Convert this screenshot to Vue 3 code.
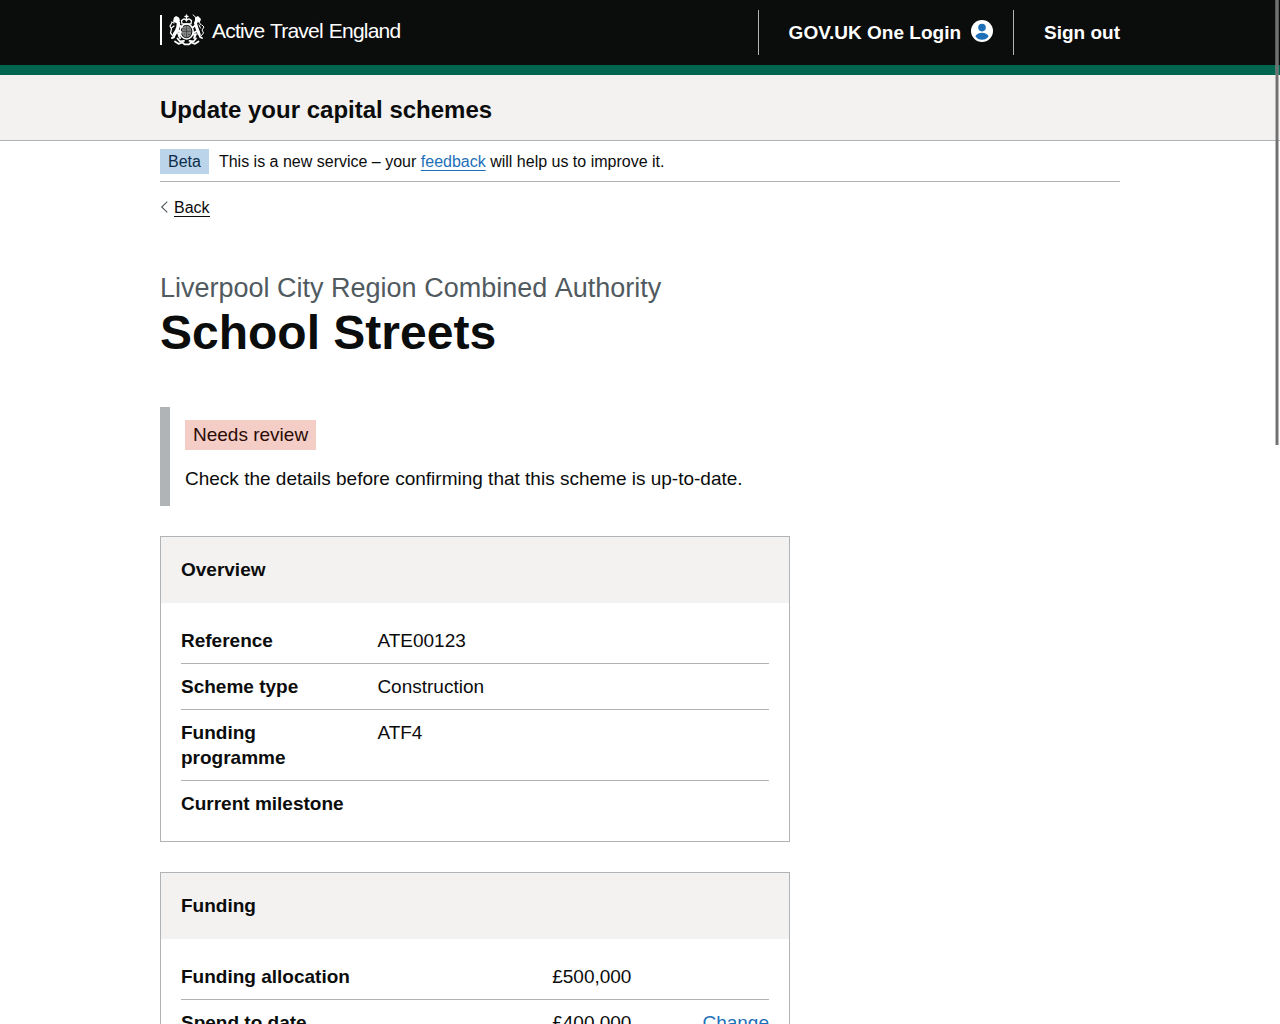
<script setup>
const overview = [
  { key: 'Reference', value: 'ATE00123' },
  { key: 'Scheme type', value: 'Construction' },
  { key: 'Funding programme', value: 'ATF4' },
  { key: 'Current milestone', value: '' },
]
const funding = [
  { key: 'Funding allocation', value: '£500,000' },
  { key: 'Spend to date', value: '£400,000', action: 'Change' },
]
</script>

<template>
  <div class="page">
    <header class="header">
      <div class="container header-row">
        <a class="brand">
          <svg class="crest" viewBox="0 0 36 32" width="36" height="32" aria-hidden="true">
            <g fill="none" stroke="#fff" stroke-linecap="round" stroke-linejoin="round">
              <path stroke-width="3.4" d="M7.500 5.500 9.500 9 9 13 7.500 17 5.500 20" />
              <path stroke-width="2" d="M9 11 13 13M8 16 12 18 10 22M6 19 5 23 3 24M9 19 11 24" />
              <path stroke-width="1.2" d="M4 22 1.500 19 2.500 15 1 12 2.500 9.500M5 9 2.500 8M5 12 3 13.500" />
              <path stroke-width="3" d="M28 5.500 26.500 9 27.500 13 29 17 30 20" />
              <path stroke-width="1.8" d="M27 11 23.500 13.500M28 17 24.500 19 26 23M30 18 31 23 33 24M27 20 25 24" />
              <path stroke-width="1" d="M28 4.500 24 .8M32 22 34.500 19 33 16 35 13 33 11M30 8 32 11M30 11 31.500 14" />
              <path stroke-width="1.3" d="M12.500 6.500 13 9.800h9l.5-3.300M13 6.500Q15 3.500 17.500 6.500 20 3.500 22 6.500M17.500 1v6M16 2.500h3" />
              <ellipse cx="17.6" cy="17.500" rx="6.6" ry="7.500" stroke-width="1.6" />
              <path stroke-width="1.8" d="M8.500 24.500 11 27.500 15 26.800M27 24.500 24.500 27.500 20.500 26.800" />
              <path stroke-width="1.8" d="M6 27.500 9.500 29.800 13.500 28.500 15.500 30.300h4.500l2-1.800 4 1.300 3.500-2.300" />
            </g>
            <ellipse cx="17.6" cy="17.500" rx="4.8" ry="5.900" fill="#858787" />
            <path fill="none" stroke="#303232" stroke-width=".7" d="M17.600 12v11M13 17.300h9.200M14.500 14.500l2 1M19 20l2 1M15 20h1M19.500 14.500h1" />
            <path fill="#fff" d="M5 3.500 7 2l3 1.500 1 3-3 3-4-2zM26 3.500 29 2l3 3-1 3-5 1z" />
          </svg>
          <span class="brand-name">Active Travel England</span>
        </a>
        <nav class="account">
          <a class="account-item login"><span>GOV.UK One Login</span>
            <svg class="user" viewBox="0 0 22 22" width="22" height="22" aria-hidden="true">
              <circle cx="11" cy="11" r="11" fill="#fff" />
              <circle cx="11" cy="7.600" r="3.800" fill="#1d70b8" />
              <path d="M4.400 16.200C5.400 14 8 12.800 11 12.800s5.600 1.200 6.600 3.400C16.200 18.500 13.800 19.800 11 19.800S5.800 18.500 4.400 16.200Z" fill="#1d70b8" />
            </svg>
          </a>
          <a class="account-item">Sign out</a>
        </nav>
      </div>
    </header>
    <div class="service">
      <div class="container service-name">Update your capital schemes</div>
    </div>
    <div class="container">
      <div class="phase">
        <strong class="phase-tag">Beta</strong>
        <span>This is a new service – your <a class="feedback">feedback</a> will help us to improve it.</span>
      </div>
      <a class="back">
        <svg viewBox="0 0 8 12" width="8" height="12" aria-hidden="true"><path d="M7.300 .7 1.700 6l5.600 5.300" fill="none" stroke="#505a5f" stroke-width="1.100" /></svg>
        <span>Back</span>
      </a>
      <main>
        <h1><span class="caption">Liverpool City Region Combined Authority</span>School Streets</h1>
        <div class="inset">
          <strong class="review-tag">Needs review</strong>
          <p>Check the details before confirming that this scheme is up-to-date.</p>
        </div>
        <section class="card">
          <h2>Overview</h2>
          <dl>
            <div v-for="row in overview" :key="row.key" class="row">
              <dt>{{ row.key }}</dt>
              <dd>{{ row.value }}</dd>
            </div>
          </dl>
        </section>
        <section class="card funding">
          <h2>Funding</h2>
          <dl>
            <div v-for="row in funding" :key="row.key" class="row">
              <dt>{{ row.key }}</dt>
              <dd>{{ row.value }}</dd>
              <dd v-if="row.action" class="action"><a>{{ row.action }}</a></dd>
            </div>
          </dl>
        </section>
      </main>
    </div>
    <div class="scroll-thumb"></div>
  </div>
</template>

<style>
html, body { overflow: hidden; }
</style>

<style scoped>
.page {
  position: relative;
  height: 1024px;
  overflow: hidden;
  background: #fff;
  color: #0b0c0c;
  font: 19px/25px "Liberation Sans", Arial, sans-serif;
}
.container { width: 960px; margin: 0 auto; }
.header { height: 65px; background: #0b0c0c; border-bottom: 10px solid #00664f; }
.header-row { display: flex; justify-content: space-between; }
.brand {
  display: flex;
  height: 30px;
  margin-top: 15px;
  padding-left: 7px;
  border-left: 2px solid #fff;
  color: #fff;
}
.crest { margin-top: -1px; }
.brand-name {
  margin-left: 7px;
  font-size: 21px;
  line-height: 32px;
  letter-spacing: -.8px;
  word-spacing: 1px;
  white-space: nowrap;
}
.account { display: flex; margin-top: 10px; color: #fff; font-weight: 700; }
.account-item { height: 45px; padding-left: 30px; border-left: 1px solid #b1b4b6; line-height: 45px; box-sizing: border-box; }
.login { display: flex; width: 255px; padding-left: 29.600px; }
.user { margin: 10px 0 0 10px; }
.service { padding: 20px 0 15px; height: 30px; background: #f3f2f1; border-bottom: 1px solid #b1b4b6; }
.service-name { font-size: 24px; line-height: 30px; font-weight: 700; }
.phase {
  display: flex;
  height: 25px;
  padding: 8px 0 7px;
  border-bottom: 1px solid #b1b4b6;
  font-size: 16px;
}
.phase-tag { margin-right: 10px; padding: 0 8px; background: #bbd4ea; color: #0c2d4a; font-weight: 400; }
.feedback { color: #1d70b8; text-decoration: underline; text-decoration-thickness: 1px; text-underline-offset: 3px; text-decoration-skip-ink: none; }
.back { display: flex; align-items: center; gap: 6px; margin-top: 15px; height: 21px; font-size: 16px; }
.back svg { margin-bottom: 2px; }
.back span { height: 18px; line-height: 20px; border-bottom: 1px solid #0b0c0c; }
main { width: 630px; padding-top: 55px; }
h1 { margin: 0 0 49px; font-size: 48px; line-height: 50px; }
.caption { display: block; margin-bottom: 5px; font-size: 27px; line-height: 30px; font-weight: 400; font-kerning: none; color: #505a5f; }
.inset { height: 99px; padding: 13px 15px 15px; box-sizing: border-box; border-left: 10px solid #b1b4b6; }
.review-tag { display: block; width: max-content; padding: 0 8px; background: #f4cdc6; color: #2a0b06; line-height: 30px; font-weight: 400; }
.inset p { margin: 16px 0 0; }
.card { margin-top: 30px; border: 1px solid #b1b4b6; }
h2 { margin: 0; padding: 20px 20px 21px; background: #f3f2f1; font-size: 19px; line-height: 25px; }
dl { margin: 0; padding: 15px 20px; }
.row { display: flex; padding: 10px 0; border-bottom: 1px solid #b1b4b6; }
.row:last-child { border-bottom: 0; }
dt { width: 176.400px; padding-right: 20px; font-weight: 700; }
dd { margin: 0; }
.funding dt { width: 351.200px; }
.action { margin-left: auto; color: #1d70b8; text-decoration: underline; text-underline-offset: 3px; }
.scroll-thumb {
  position: absolute;
  top: 0;
  right: 1px;
  width: 2px;
  height: 445px;
  border: solid rgba(140, 140, 140, .6);
  border-width: 0 1px;
  background: #717171;
  background-clip: padding-box;
}
</style>
